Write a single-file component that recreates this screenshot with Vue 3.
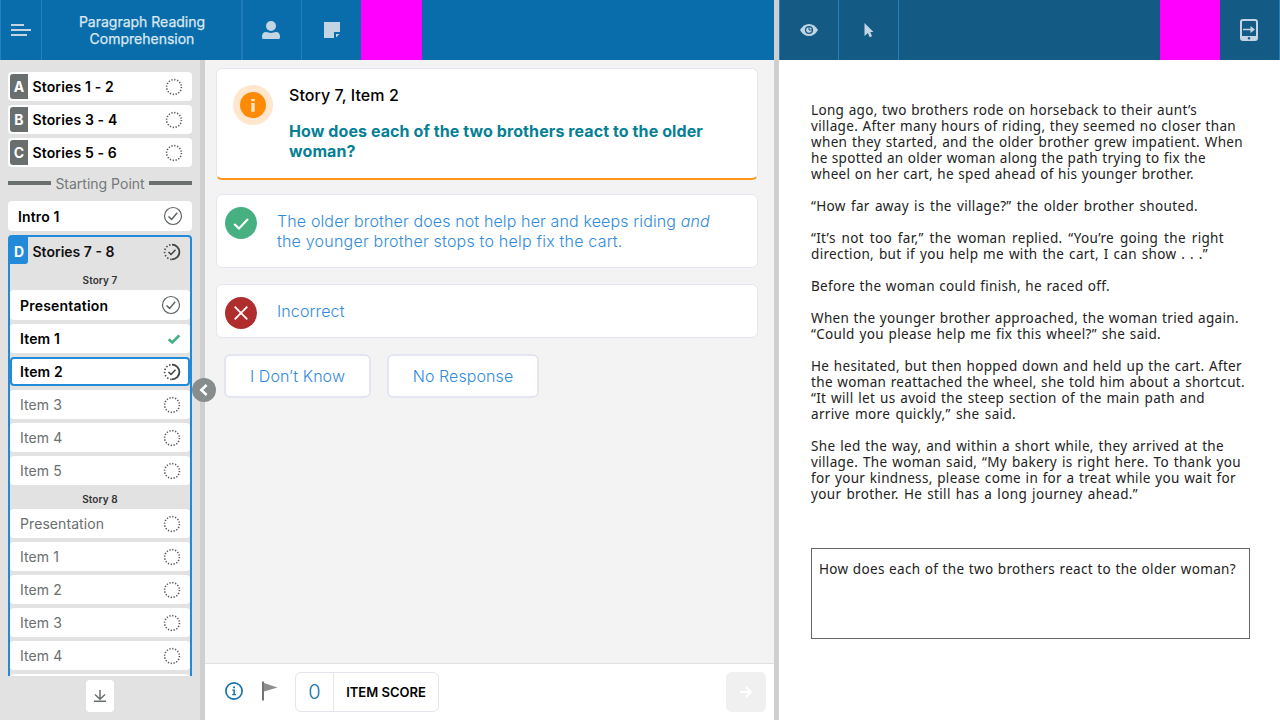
<script setup>
const blocks = [
  { letter: 'A', name: 'Stories 1 - 2' },
  { letter: 'B', name: 'Stories 3 - 4' },
  { letter: 'C', name: 'Stories 5 - 6' },
]
const stories = [
  {
    title: 'Story 7',
    rows: [
      { name: 'Presentation', state: 'done', tall: true },
      { name: 'Item 1', state: 'correct' },
      { name: 'Item 2', state: 'progress', current: true },
      { name: 'Item 3', state: 'todo' },
      { name: 'Item 4', state: 'todo' },
      { name: 'Item 5', state: 'todo' },
    ],
  },
  {
    title: 'Story 8',
    rows: [
      { name: 'Presentation', state: 'todo' },
      { name: 'Item 1', state: 'todo' },
      { name: 'Item 2', state: 'todo' },
      { name: 'Item 3', state: 'todo' },
      { name: 'Item 4', state: 'todo' },
      { name: '', state: 'todo' },
    ],
  },
]
const passage = [
  [
    ['Long ago, two brothers rode on horseback to their aunt’s', 386],
    ['village. After many hours of riding, they seemed no closer than', 425],
    ['when they started, and the older brother grew impatient. When', 432],
    ['he spotted an older woman along the path trying to fix the', 395],
    ['wheel on her cart, he sped ahead of his younger brother.', 383],
  ],
  [['“How far away is the village?” the older brother shouted.', 387]],
  [
    ['“It’s not too far,” the woman replied. “You’re going the right', 413],
    ['direction, but if you help me with the cart, I can show . . .”', 397],
  ],
  [['Before the woman could finish, he raced off.', 299]],
  [
    ['When the younger brother approached, the woman tried again.', 428],
    ['“Could you please help me fix this wheel?” she said.', 350],
  ],
  [
    ['He hesitated, but then hopped down and held up the cart. After', 431],
    ['the woman reattached the wheel, she told him about a shortcut.', 434],
    ['“It will let us avoid the steep section of the main path and', 394],
    ['arrive more quickly,” she said.', 205],
  ],
  [
    ['She led the way, and within a short while, they arrived at the', 413],
    ['village. The woman said, “My bakery is right here. To thank you', 430],
    ['for your kindness, please come in for a treat while you wait for', 425],
    ['your brother. He still has a long journey ahead.”', 327],
  ],
]
</script>

<template>
  <div class="app">
    <section class="left">
      <header class="bar">
        <div class="cell menu">
          <svg width="20" height="12" viewBox="0 0 20 12"><path d="M0 1h13M0 6h20M0 11h16" stroke="#c3d5e3" stroke-width="2" /></svg>
        </div>
        <div class="cell title">Paragraph Reading<br />Comprehension</div>
        <div class="cell tool">
          <svg width="18" height="18" viewBox="0 0 18 18" fill="#c3d5e3"><circle cx="9" cy="5" r="5" /><path d="M4 11C6 11 7 12 9 12S12 11 14 11C16.600 11 18 13 18 15.500V16.500Q18 18 16.500 18H1.500Q0 18 0 16.500V15.500C0 13 1.400 11 4 11Z" /></svg>
        </div>
        <div class="cell tool">
          <svg width="16" height="16" viewBox="0 0 16 16" fill="#c3d5e3"><path d="M0 0H16V10H10V16H0ZM12 15.500V12H15.500Z" /></svg>
        </div>
        <div class="mask"></div>
      </header>

      <div class="body">
        <aside class="side">
          <div class="list">
            <div v-for="b in blocks" :key="b.letter" class="row block">
              <b class="badge">{{ b.letter }}</b><span>{{ b.name }}</span>
              <svg class="ic" width="18" height="18" viewBox="0 0 18 18"><circle cx="9" cy="9" r="7.400" class="dots" /></svg>
            </div>
            <div class="start"><i></i><span>Starting Point</span><i></i></div>
            <div class="row intro">
              <span>Intro 1</span>
              <svg class="ic done" width="20" height="20" viewBox="0 0 20 20"><circle cx="10" cy="10" r="8.500" /><path d="M5.500 10.500L8.600 13.400L14.200 6.700" stroke-width="1.500" /></svg>
            </div>
            <div class="group">
              <div class="ghead">
                <b class="badge">D</b><span>Stories 7 - 8</span>
                <svg class="ic" width="18" height="18" viewBox="0 0 18 18" fill="none" stroke="#3f4242"><path d="M9 1.600A7.400 7.400 0 0 1 9 16.400" stroke-width="1.800" /><path d="M9 1.600A7.400 7.400 0 0 0 9 16.400" stroke-width="1.600" stroke-dasharray="1.400 1.900" stroke-dashoffset="-1.500" /><path d="M5.500 9L8 11.500L12.500 6.800" stroke-width="1.500" /></svg>
              </div>
              <template v-for="s in stories" :key="s.title">
                <div class="story">{{ s.title }}</div>
                <div v-for="r in s.rows" :key="r.name" class="row item" :class="[r.state, { current: r.current, tall: r.tall }]">
                  <span>{{ r.name }}</span>
                  <svg v-if="r.state === 'todo'" class="ic" width="18" height="18" viewBox="0 0 18 18"><circle cx="9" cy="9" r="7.400" class="dots" /></svg>
                  <svg v-else-if="r.state === 'done'" class="ic done" width="20" height="20" viewBox="0 0 20 20"><circle cx="10" cy="10" r="8.500" /><path d="M5.500 10.500L8.600 13.400L14.200 6.700" stroke-width="1.500" /></svg>
                  <svg v-else-if="r.state === 'correct'" class="ic" width="14" height="12" viewBox="0 0 14 12"><path d="M1.700 6.200L5.300 9.500L12.300 2.400" fill="none" stroke="#45b080" stroke-width="2.700" /></svg>
                  <svg v-else class="ic" width="18" height="18" viewBox="0 0 18 18" fill="none" stroke="#3f4242"><path d="M9 1.600A7.400 7.400 0 0 1 9 16.400" stroke-width="1.800" /><path d="M9 1.600A7.400 7.400 0 0 0 9 16.400" stroke-width="1.600" stroke-dasharray="1.400 1.900" stroke-dashoffset="-1.500" /><path d="M5.500 9L8 11.500L12.500 6.800" stroke-width="1.500" /></svg>
                </div>
              </template>
            </div>
          </div>
          <div class="down">
            <svg width="14" height="14" viewBox="0 0 14 14" fill="none" stroke="#696e6e" stroke-width="1.500"><path d="M7 1V10M2 5.500L7 10.300L12 5.500M1 12.300H13" /></svg>
          </div>
          <div class="collapse">
            <svg width="24" height="24" viewBox="0 0 24 24"><path d="M14.600 7L9.300 12L14.600 17" fill="none" stroke="#fff" stroke-width="2.500" /></svg>
          </div>
        </aside>

        <main class="main">
          <div class="content">
            <div class="card question">
              <div class="halo">
                <svg width="26" height="26" viewBox="0 0 26 26"><circle cx="13" cy="13" r="13" fill="#ff8a05" /><path d="M11.300 6.900H14.700V9.200H11.300ZM11.300 11H14.700V19.700H11.300Z" fill="#ffe4c5" /></svg>
              </div>
              <div class="qtext">
                <div class="qtitle">Story 7, Item 2</div>
                <div class="q">How does each of the two brothers react to the older<br />woman?</div>
              </div>
            </div>
            <div class="card answer first">
              <svg width="32" height="32" viewBox="0 0 32 32"><circle cx="16" cy="16" r="16" fill="#46b081" /><path d="M9.200 17L14 21.500L23 12" fill="none" stroke="#fff" stroke-width="2.200" /></svg>
              <div><span class="a1">The older brother does not help her and keeps riding <em>and</em></span><br /><span class="a2">the younger brother stops to help fix the cart.</span></div>
            </div>
            <div class="card answer second">
              <svg width="32" height="32" viewBox="0 0 32 32"><circle cx="16" cy="16" r="16" fill="#b02d2d" /><path d="M9.700 9.700L22.300 22.300M22.300 9.700L9.700 22.300" stroke="#fff" stroke-width="1.800" /></svg>
              <div class="a1">Incorrect</div>
            </div>
            <div class="buttons">
              <button class="dk">I Don’t Know</button>
              <button class="nr">No Response</button>
            </div>
          </div>
          <footer class="foot">
            <svg class="info" width="18" height="18" viewBox="0 0 18 18"><circle cx="9" cy="9" r="8.100" fill="none" stroke="#1672ad" stroke-width="1.700" /><path d="M8.200 4.600H10V6.300H8.200ZM7.300 7.600H9.900V12H11V13.200H7.200V12H8.400V8.700H7.300Z" fill="#1672ad" /></svg>
            <svg class="flag" width="16" height="20" viewBox="0 0 16 20"><path d="M1 .500V19.500" stroke="#666" stroke-width="1.800" /><path d="M2 2L15.500 6.500L2 10.500Z" fill="#8e8e8e" /></svg>
            <div class="score"><span class="num">0</span><span class="lab">ITEM SCORE</span></div>
            <div class="next"><svg width="14" height="14" viewBox="0 0 14 14" fill="none" stroke="#fff" stroke-width="2"><path d="M1 7H12M7 2L12 7L7 12" /></svg></div>
          </footer>
        </main>
      </div>
    </section>

    <section class="right">
      <header class="bar dark">
        <div class="cell eye">
          <svg width="18" height="12" viewBox="0 0 18 12"><path d="M0 6Q3.500 0 9 0T18 6Q14.500 12 9 12T0 6Z" fill="#c3d5e3" /><circle cx="9" cy="6" r="4.100" fill="#135b85" /><circle cx="9" cy="6" r="2.800" fill="#c3d5e3" /><path d="M9 3V6H12" fill="none" stroke="#135b85" stroke-width="1" /></svg>
        </div>
        <div class="cell tool pointer">
          <svg width="10" height="15" viewBox="0 0 10 15"><path d="M.500 0L9.500 9H6.300L8 13.200L5.700 14.200L3.900 10L.500 13Z" fill="#c3d5e3" /></svg>
        </div>
        <div class="mask"></div>
        <div class="cell device">
          <svg width="18" height="22" viewBox="0 0 18 22"><rect x="1" y="1" width="16" height="20" rx="2" fill="none" stroke="#c3d5e3" stroke-width="2" /><path d="M1 17H17V21H1Z" fill="#c3d5e3" /><circle cx="9" cy="19.200" r="1.200" fill="#135b85" /><path d="M3 9.800H10.500V7L15 10.500L10.500 14V11.200H3Z" fill="#c3d5e3" /></svg>
        </div>
      </header>
      <article class="passage">
        <p v-for="(p, i) in passage" :key="i">
          <span v-for="l in p" :key="l[0]" class="line" :style="{ width: l[1] + 'px' }">{{ l[0] }}</span>
        </p>
        <div class="box"><span class="line" :style="{ width: '417px' }">How does each of the two brothers react to the older woman?</span></div>
      </article>
    </section>
  </div>
</template>

<style>
body { margin: 0; overflow: hidden; }
</style>

<style scoped>
.app { display: flex; width: 1280px; height: 720px; overflow: hidden; background: #fff; font-family: Inter, "Liberation Sans", sans-serif; color: #000; }
.app * { box-sizing: border-box; }
svg { display: block; flex: none; }
.left { width: 774px; display: flex; flex-direction: column; }
.right { width: 506px; border-left: 5px solid #cfcfcf; }
.bar { display: flex; height: 60px; background: #0a6dab; flex: none; border-left: 1px solid #2580bd; }
.bar.dark { background: #135b85; border-right: 1px solid #2580bd; }
.cell { display: flex; align-items: center; justify-content: center; border-right: 1px solid #2580bd; }
.menu { width: 41px; }
.title { width: 201px; border-right-width: 2px; border-right-color: #1f7bb8; font-size: 14px; line-height: 17px; text-align: center; color: #dbe8f2; padding: 0 0 1px 1px; -webkit-text-stroke: .25px #dbe8f2; }
.left .tool { width: 59px; padding-right: 2px; }
.left .tool + .tool { width: 59px; padding-right: 0; border-right: 0; }
.mask { width: 60px; background: #f0f; }
.left .mask { width: 61px; }
.eye { width: 59px; }
.right .tool { width: 60px; }
.right .mask { margin-left: auto; }
.device { width: 59px; border: 0; padding-right: 1px; }
.body { display: flex; flex: 1; min-height: 0; }
.side { position: relative; width: 205px; background: #e2e2e2; border-right: 5px solid #cfcfcf; }
.list { height: 616px; overflow: hidden; padding: 12px 8px 0; }
.row { display: flex; align-items: center; height: 29px; margin-bottom: 4px; border-radius: 4px; background: #fff; font-size: 14px; font-weight: 600; letter-spacing: .14px; }
.ic { margin-left: auto; }
.dots { fill: none; stroke: #555a5a; stroke-width: 1.600; stroke-dasharray: 1.250 1.656; }
.done { fill: none; stroke: #5f6464; stroke-width: 1.200; }
.block { padding: 0 9px 0 2px; }
.badge { width: 18px; height: 25px; line-height: 26px; margin-right: 4.500px; border-radius: 3px 0 0 3px; background: #696e6e; color: #fff; text-align: center; font-weight: 700; font-size: 14px; letter-spacing: 0; }
.start { display: flex; align-items: center; gap: 4px; height: 24px; margin-bottom: 6px; font-size: 14px; color: #737878; }
.start i { flex: 1; height: 4px; background: #696e6e; }
.intro { height: 30px; padding: 0 9px 0 10px; }
.group { border: 2px solid #238ada; border-radius: 4px 4px 0 0; height: 600px; }
.ghead { display: flex; align-items: center; height: 30px; padding-right: 9px; font-size: 14px; font-weight: 600; }
.ghead .badge { align-self: flex-start; height: 27px; line-height: 30px; background: #238ada; border-radius: 0 0 3px 0; }
.ghead .badge + span { color: #111; padding-bottom: 1px; }
.story { height: 23px; font-size: 10px; font-weight: 600; line-height: 27px; text-align: center; color: #333; letter-spacing: .08px; }
.todo + .story { height: 20px; line-height: 20px; }
.item { padding: 0 9px 0 10px; }
.item.tall { height: 30px; letter-spacing: .2px; }
.item.todo { font-weight: 400; color: #696e6e; letter-spacing: .08px; }
.item.current { border: 2px solid #238ada; padding: 0 7px 0 8px; }
.down { display: flex; align-items: center; justify-content: center; width: 28px; height: 32px; margin: 4px auto 0; border-radius: 4px; background: #fff; }
.collapse { position: absolute; left: 192px; top: 318px; width: 24px; height: 24px; border-radius: 50%; background: #878c8c; z-index: 2; }
.main { width: 569px; display: flex; flex-direction: column; background: #f3f3f3; }
.content { flex: 1; padding: 8px 16px 0 11px; }
.card { display: flex; background: #fff; border: 1px solid #e3e6f1; border-radius: 6px; }
.question { height: 112px; border-bottom: 2px solid #ff9519; padding: 16px; }
.halo { display: flex; align-items: center; justify-content: center; width: 40px; height: 40px; border-radius: 50%; background: #ffe6cc; }
.qtext { margin-left: 16px; }
.qtitle { font-size: 16px; font-weight: 500; line-height: 20px; letter-spacing: .06px; }
.q { margin-top: 16px; font-size: 16px; line-height: 20px; font-weight: 700; color: #068094; letter-spacing: .09px; }
.answer { padding: 12px 8px; font-size: 16px; line-height: 20px; color: #318bdc; font-weight: 300; }
.answer > div { margin: 4px 0 0 20px; }
.a1 { letter-spacing: .13px; }
.a2 { letter-spacing: .21px; }
.first { height: 74px; margin-top: 14px; }
.second { height: 54px; margin-top: 16px; }
.buttons { display: flex; gap: 16px; padding: 16px 8px; }
button { height: 44px; padding: 0; border: 2px solid #e3e6f1; border-radius: 6px; background: #fff; color: #318bdc; font: 300 16px Inter, "Liberation Sans", sans-serif; letter-spacing: .08px; }
.dk { width: 147px; }
.nr { width: 152px; }
.foot { display: flex; align-items: center; height: 57px; padding: 0 8px 0 20px; border-top: 1px solid #e0e0e0; background: #fff; }
.info { margin-top: -2px; }
.flag { margin: -2px 17px 0 19px; }
.score { display: flex; width: 144px; height: 40px; border: 1px solid #e3e6f1; border-radius: 6px; }
.num { width: 38px; line-height: 38px; border-right: 1px solid #e3e6f1; text-align: center; font-size: 20px; font-weight: 300; color: #1672ad; }
.lab { flex: 1; line-height: 39px; text-align: center; font-size: 13px; font-weight: 600; }
.next { display: flex; align-items: center; justify-content: center; width: 40px; height: 40px; margin-left: auto; border-radius: 6px; background: #f0f0f0; }
.passage { padding: 42px 30px 0 32px; font: 13.500px/16px "Noto Sans", "Open Sans", sans-serif; letter-spacing: .34px; color: #222; }
.passage p { margin: 0 0 16px; }
.line { display: block; white-space: nowrap; text-align-last: justify; }
.box { width: 439px; height: 91px; margin-top: 46px; padding: 12px 7px; border: 1px solid #666; }
</style>
